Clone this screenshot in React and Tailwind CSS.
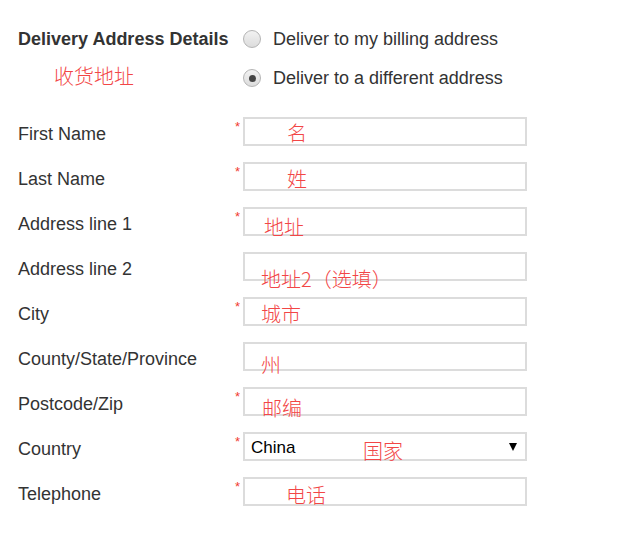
import React from "react";

const fields = [
  { label: "First Name", required: true, note: "名", x: "left-[44px]", y: "top-[6px]" },
  { label: "Last Name", required: true, note: "姓", x: "left-[44px]", y: "top-[7px]" },
  { label: "Address line 1", required: true, note: "地址", x: "left-[21px]", y: "top-[10px]" },
  { label: "Address line 2", required: false, note: "地址2（选填）", x: "left-[18px]", y: "top-[17px]" },
  { label: "City", required: true, note: "城市", x: "left-[18px]", y: "top-[7px]" },
  { label: "County/State/Province", required: false, note: "州", x: "left-[18px]", y: "top-[13px]" },
  { label: "Postcode/Zip", required: true, note: "邮编", x: "left-[19px]", y: "top-[11px]" },
  { label: "Country", required: true, note: "国家", x: "left-[120px]", y: "top-[9px]", select: true },
  { label: "Telephone", required: true, note: "电话", x: "left-[43px]", y: "top-[8px]" },
];

const cjk = "font-['Noto_Sans_CJK_SC',sans-serif] text-[20px] leading-none text-[#f24646] font-light";

function Radio({ checked }) {
  return (
    <span className="w-[18px] h-[18px] rounded-full border border-[#b4b4b4] bg-gradient-to-b from-[#f2f2f2] to-[#dcdcdc] flex items-center justify-center shrink-0">
      {checked && <span className="w-[7px] h-[7px] rounded-full bg-[#444]" />}
    </span>
  );
}

function Field({ field }) {
  return (
    <div className="flex h-[29px]">
      <div className="w-[218px] leading-[29px] pt-[3px] text-[18px] text-[#333]">{field.label}</div>
      <div className="w-[7px] relative">
        {field.required && (
          <span className="absolute left-[-1px] top-[3px] text-[13px] leading-none text-[#f03c30]">*</span>
        )}
      </div>
      <div className="relative w-[284px] h-[29px]">
        {field.select ? (
          <div className="w-full h-full border-2 border-[#dcdcdc] bg-white flex items-center justify-between pl-[6px] pr-[8px]">
            <span className="text-[17px] text-black pt-[2px]">China</span>
            <svg width="8" height="8" viewBox="0 0 8 8" className="mt-[1px]">
              <polygon points="0,0 8,0 4,8" fill="#000" />
            </svg>
          </div>
        ) : (
          <input type="text" className="w-full h-full border-2 border-[#dcdcdc] bg-white outline-none" />
        )}
        <span className={`absolute ${field.x} ${field.y} ${cjk} whitespace-nowrap pointer-events-none`}>
          {field.note}
        </span>
      </div>
    </div>
  );
}

export default function App() {
  return (
    <div className="w-[619px] h-[548px] bg-white font-['Liberation_Sans',Arial,sans-serif] pl-[18px] pt-[27px]">
      {/* Header with radio choice */}
      <div className="flex flex-col gap-[15px]">
        <div className="flex h-[24px]">
          <div className="w-[225px] text-[18px] font-bold leading-[24px] text-[#333]">Delivery Address Details</div>
          <label className="flex items-center gap-[12px] text-[18px] leading-[24px] text-[#333]">
            <Radio />
            Deliver to my billing address
          </label>
        </div>
        <div className="flex h-[24px]">
          <div className="w-[225px] pl-[36px]">
            <span className={`${cjk} leading-[24px]`}>收货地址</span>
          </div>
          <label className="flex items-center gap-[12px] text-[18px] leading-[24px] text-[#333]">
            <Radio checked />
            Deliver to a different address
          </label>
        </div>
      </div>

      <div className="flex flex-col gap-[16px] mt-[27px]">
        {fields.map((f) => (
          <Field key={f.label} field={f} />
        ))}
      </div>
    </div>
  );
}
